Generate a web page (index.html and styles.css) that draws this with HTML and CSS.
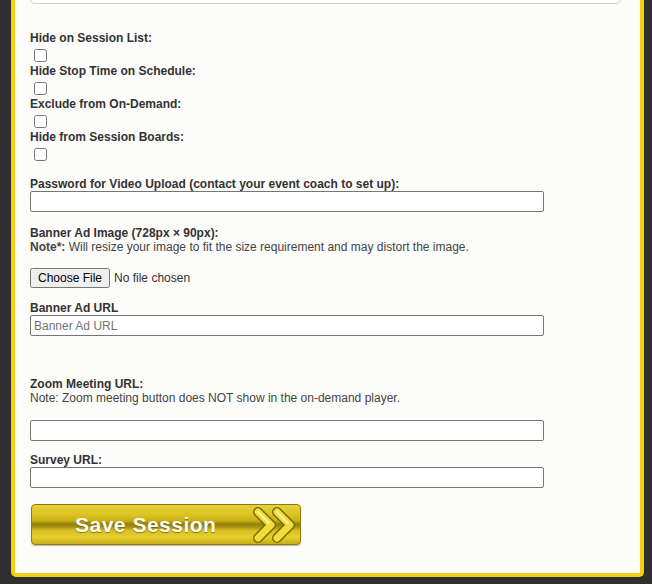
FILE: index.html
```html
<!DOCTYPE html>
<html lang="en">
<head>
  <meta charset="UTF-8" />
  <meta name="viewport" content="width=device-width, initial-scale=1.0" />
  <title>Edit Session</title>
  <link rel="stylesheet" href="styles.css">
</head>
<body>
  <form class="panel" onsubmit="return false;">
    <textarea class="notes" aria-label="Session description"></textarea>

    <div class="check-field">
      <label for="hideList">Hide on Session List:</label>
      <input type="checkbox" id="hideList">
    </div>
    <div class="check-field">
      <label for="hideStop">Hide Stop Time on Schedule:</label>
      <input type="checkbox" id="hideStop">
    </div>
    <div class="check-field">
      <label for="excludeOnDemand">Exclude from On-Demand:</label>
      <input type="checkbox" id="excludeOnDemand">
    </div>
    <div class="check-field check-last">
      <label for="hideBoards">Hide from Session Boards:</label>
      <input type="checkbox" id="hideBoards">
    </div>

    <div class="field">
      <label for="videoPassword">Password for Video Upload (contact your event coach to set up):</label>
      <input type="text" id="videoPassword" class="text-input">
    </div>

    <div class="field field-file">
      <label for="bannerImage">Banner Ad Image (728px × 90px):</label>
      <p class="note"><b>Note*:</b> Will resize your image to fit the size requirement and may distort the image.</p>
      <input type="file" id="bannerImage" class="file-input">
    </div>

    <div class="field field-wide">
      <label for="bannerUrl">Banner Ad URL</label>
      <input type="text" id="bannerUrl" class="text-input" placeholder="Banner Ad URL">
    </div>

    <div class="field field-zoom">
      <label for="zoomUrl">Zoom Meeting URL:</label>
      <p class="note note-gap">Note: Zoom meeting button does NOT show in the on-demand player.</p>
      <input type="text" id="zoomUrl" class="text-input">
    </div>

    <div class="field field-last">
      <label for="surveyUrl">Survey URL:</label>
      <input type="text" id="surveyUrl" class="text-input">
    </div>

    <button type="submit" class="save-btn">
      <span class="save-text">Save Session</span>
      <svg class="chevrons" width="44" height="36" viewBox="0 0 44 36">
        <path d="M5 5 L18 18 L5 31" fill="none" stroke="#7a6a0a" stroke-width="10" stroke-linecap="round" stroke-linejoin="round"/>
        <path d="M5 5 L18 18 L5 31" fill="none" stroke="#f1dc3a" stroke-width="7" stroke-linecap="round" stroke-linejoin="round"/>
        <path d="M5 5 L16 16" fill="none" stroke="#fbf3a6" stroke-width="2" stroke-linecap="round"/>
        <path d="M24 5 L37 18 L24 31" fill="none" stroke="#7a6a0a" stroke-width="10" stroke-linecap="round" stroke-linejoin="round"/>
        <path d="M24 5 L37 18 L24 31" fill="none" stroke="#f1dc3a" stroke-width="7" stroke-linecap="round" stroke-linejoin="round"/>
        <path d="M24 5 L35 16" fill="none" stroke="#fbf3a6" stroke-width="2" stroke-linecap="round"/>
      </svg>
    </button>
  </form>
</body>
</html>
```

FILE: styles.css
```css
body {
  margin: 0;
  background-color: #2f2f2f;
  font-family: 'Liberation Sans', Arial, sans-serif;
}

.panel {
  display: flow-root;
  margin: 0 8px 7px 11px;
  padding: 0 19px 28px 15px;
  background-color: #fcfcfa;
  border: 4px solid #f4d012;
  border-top: none;
  border-radius: 0 0 5px 5px;
}

.notes {
  display: block;
  box-sizing: border-box;
  width: 591px;
  height: 40px;
  margin: -36px 0 27px;
  border: 1px solid #cfcfcf;
  border-radius: 5px;
  background-color: #fff;
  resize: none;
}

label {
  display: block;
  font-size: 12px;
  line-height: 14px;
  font-weight: bold;
  color: #333;
}

.check-field input {
  display: block;
  width: 13px;
  height: 13px;
  margin: 4px 0 2px 4px;
}

.check-last {
  margin-bottom: 16px;
}

.field {
  margin-bottom: 14px;
}

.field-file {
  margin-bottom: 12px;
}

.field-wide {
  margin-bottom: 41px;
}

.field-zoom {
  margin-bottom: 12px;
}

.field-last {
  margin-bottom: 16px;
}

.note {
  margin: 0 0 14px;
  font-size: 12px;
  line-height: 14px;
  color: #444;
}

.note-gap {
  margin-bottom: 15px;
}

.text-input {
  display: block;
  box-sizing: border-box;
  width: 514px;
  height: 21px;
  margin: 0;
  padding: 1px 3px;
  border: 1px solid #767676;
  border-radius: 2px;
  background-color: #fff;
  font-family: 'Liberation Sans', Arial, sans-serif;
  font-size: 12px;
}

.text-input::placeholder {
  color: #757575;
}

.file-input {
  display: block;
  height: 21px;
  margin: 0;
  font-family: 'Liberation Sans', Arial, sans-serif;
  font-size: 12px;
  color: #333;
}

.save-btn {
  display: flex;
  align-items: center;
  justify-content: space-between;
  box-sizing: border-box;
  width: 270px;
  height: 41px;
  margin-left: 1px;
  padding: 0 3px 0 43px;
  border: 1px solid #8d7c10;
  border-radius: 4px;
  background: linear-gradient(to bottom,
    #e6d23c 0%,
    #dcc322 25%,
    #c9b016 40%,
    #94800c 49%,
    #a38d10 55%,
    #d9c021 66%,
    #e6cf2e 82%,
    #c8ae18 100%);
  box-shadow: 0 1px 1px rgba(0, 0, 0, 0.25);
  cursor: pointer;
}

.save-text {
  font-family: 'Liberation Sans', Arial, sans-serif;
  font-size: 21px;
  font-weight: bold;
  letter-spacing: 0.5px;
  color: #fffdf0;
  text-shadow: 0 1px 1px rgba(60, 50, 0, 0.5);
}

.chevrons {
  display: block;
}
```
